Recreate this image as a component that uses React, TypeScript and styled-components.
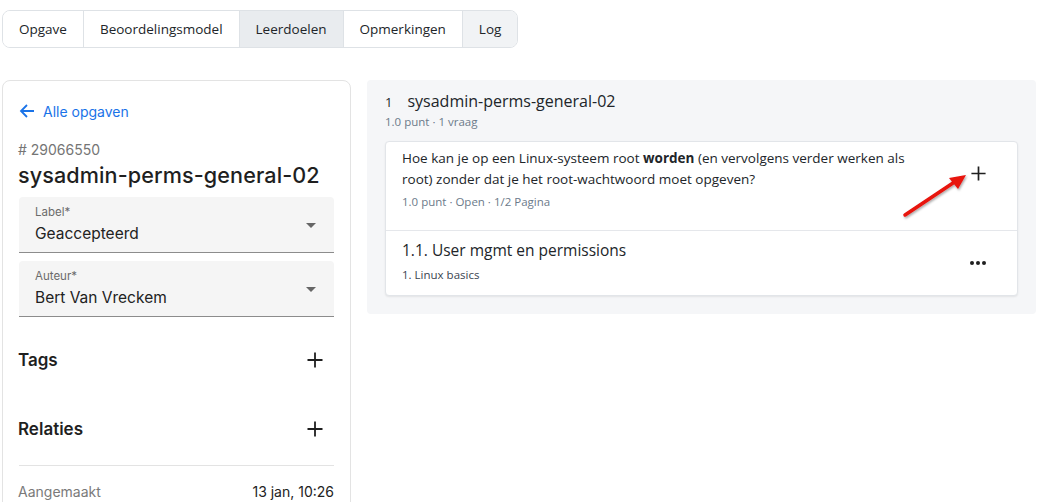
import React from "react";
import styled, { createGlobalStyle } from "styled-components";

const Global = createGlobalStyle`
  body { margin: 0; background: #fff; font-family: "Lato", "Open Sans", sans-serif; color: #212529; }
  * { box-sizing: border-box; }
`;

const Page = styled.div`
  width: 1052px;
  height: 502px;
  overflow: hidden;
  padding: 10px 16px 0 2px;
`;

const Tabs = styled.div`
  display: inline-flex;
  border: 1px solid #dee2e6;
  border-radius: 8px;
  overflow: hidden;
  height: 38px;
`;

const Tab = styled.div<{ $active?: boolean; $muted?: boolean }>`
  display: flex;
  align-items: center;
  padding: 0 16px;
  font-family: "Open Sans", sans-serif;
  font-size: 13.5px;
  color: #212529;
  background: ${(p) => (p.$active ? "#e9ecef" : p.$muted ? "#f1f3f5" : "#fff")};
  border-left: 1px solid #dee2e6;
  &:first-child { border-left: none; }
`;

const Main = styled.div`
  display: flex;
  gap: 16px;
  margin-top: 32px;
  align-items: flex-start;
`;

const Side = styled.div`
  width: 349px;
  height: 440px;
  border: 1px solid #e3e3e3;
  border-radius: 8px;
  padding: 19px 16px 0 15px;
  font-family: "Inter", sans-serif;
`;

const BackLink = styled.div`
  display: flex;
  align-items: center;
  gap: 8px;
  color: #1a73e8;
  font-size: 14px;
  height: 22px;
  padding-left: 1px;
`;

const Id = styled.div`
  margin-top: 18px;
  color: #757575;
  font-size: 14px;
  line-height: 20px;
`;

const Title = styled.div`
  font-size: 21.6px;
  font-weight: 500;
  color: #1f1f1f;
  line-height: 28px;
  margin-top: 1px;
  letter-spacing: 0.1px;
`;

const Select = styled.div`
  position: relative;
  margin-top: 8px;
  margin-left: 1px;
  height: 56px;
  background: #f5f5f5;
  border-radius: 4px 4px 0 0;
  border-bottom: 1px solid #8c8c8c;
  padding: 8px 16px 0 16px;
`;

const SelectLabel = styled.div`
  font-size: 11.5px;
  color: #6b6b6b;
  line-height: 14px;
`;

const SelectValue = styled.div`
  font-size: 15.5px;
  color: #222;
  line-height: 24px;
  margin-top: 3px;
`;

const Caret = styled.div`
  position: absolute;
  right: 18px;
  top: 26px;
  width: 0;
  height: 0;
  border-left: 5px solid transparent;
  border-right: 5px solid transparent;
  border-top: 5px solid #666;
`;

const Section = styled.div<{ $top: number }>`
  display: flex;
  justify-content: space-between;
  align-items: center;
  margin-top: ${(p) => p.$top}px;
  padding-right: 10px;
  font-size: 17px;
  font-weight: 600;
  color: #1f1f1f;
  height: 24px;
`;

const Divider = styled.div`
  margin-top: 24px;
  margin-left: 1px;
  height: 1px;
  background: #e3e3e3;
`;

const MetaRow = styled.div`
  display: flex;
  justify-content: space-between;
  margin-top: 17px;
  font-size: 14px;
  color: #7a7a7a;
  & > span:last-child { color: #222; }
`;

const Panel = styled.div`
  position: relative;
  width: 669px;
  background: #f5f6f8;
  border-radius: 4px;
  padding: 10px 18px 18px 18px;
  font-family: "Open Sans", sans-serif;
`;

const PanelHead = styled.div`
  display: flex;
  align-items: baseline;
  gap: 15px;
  color: #212529;
`;

const Num = styled.span`
  font-size: 13px;
`;

const PanelTitle = styled.span`
  font-size: 16px;
  font-weight: 500;
`;

const Sub = styled.div`
  margin-top: 2px;
  font-size: 11.5px;
  color: #6c7a8a;
`;

const Card = styled.div`
  margin-top: 12px;
  background: #fff;
  border: 1px solid #e2e5e9;
  border-radius: 4px;
  box-shadow: 0 1px 2px rgba(0, 0, 0, 0.08);
`;

const QuestionRow = styled.div`
  display: flex;
  justify-content: space-between;
  align-items: flex-start;
  padding: 6px 30px 0 16px;
  height: 88px;
`;

const GoalRow = styled.div`
  display: flex;
  justify-content: space-between;
  align-items: center;
  padding: 0 30px 0 16px;
  height: 65px;
  border-top: 1px solid #e5e7eb;
`;

const Question = styled.div`
  font-size: 13.5px;
  line-height: 21px;
  color: #212529;
  width: 520px;
`;

const Small = styled.div`
  margin-top: 4px;
  font-size: 11.5px;
  line-height: 16px;
  color: #6c7a8a;
`;

const PlusSlot = styled.div`
  margin-top: 17px;
  display: flex;
`;

const Goal = styled.div`
  font-size: 15.5px;
  font-weight: 500;
  color: #212529;
  margin-top: -6px;
`;

const GoalSub = styled.div`
  font-size: 11.5px;
  color: #3a4450;
  margin-top: 6px;
`;

const ArrowOverlay = styled.svg`
  position: absolute;
  left: 530px;
  top: 87px;
  overflow: visible;
`;

const Plus = ({ size = 18 }: { size?: number }) => (
  <svg width={size} height={size} viewBox="0 0 18 18">
    <path d="M9 1.5V16.5M1.5 9H16.5" stroke="#1f1f1f" strokeWidth="1.8" />
  </svg>
);

export default function App() {
  return (
    <Page>
      <Global />
      <Tabs>
        <Tab>Opgave</Tab>
        <Tab>Beoordelingsmodel</Tab>
        <Tab $active>Leerdoelen</Tab>
        <Tab>Opmerkingen</Tab>
        <Tab $muted>Log</Tab>
      </Tabs>
      <Main>
        <Side>
          <BackLink>
            <svg width="16" height="16" viewBox="0 0 16 16">
              <path d="M15 8H2M8 2L2 8l6 6" stroke="#1a73e8" strokeWidth="1.8" fill="none" />
            </svg>
            Alle opgaven
          </BackLink>
          <Id># 29066550</Id>
          <Title>sysadmin-perms-general-02</Title>
          <Select>
            <SelectLabel>Label*</SelectLabel>
            <SelectValue>Geaccepteerd</SelectValue>
            <Caret />
          </Select>
          <Select>
            <SelectLabel>Auteur*</SelectLabel>
            <SelectValue>Bert Van Vreckem</SelectValue>
            <Caret />
          </Select>
          <Section $top={31}>
            Tags <Plus />
          </Section>
          <Section $top={45}>
            Relaties <Plus />
          </Section>
          <Divider />
          <MetaRow>
            <span>Aangemaakt</span>
            <span>13 jan, 10:26</span>
          </MetaRow>
        </Side>
        <Panel>
          <PanelHead>
            <Num>1</Num>
            <PanelTitle>sysadmin-perms-general-02</PanelTitle>
          </PanelHead>
          <Sub>1.0 punt · 1 vraag</Sub>
          <Card>
            <QuestionRow>
              <div>
                <Question>
                  Hoe kan je op een Linux-systeem root <b>worden</b> (en vervolgens verder werken als
                  root) zonder dat je het root-wachtwoord moet opgeven?
                </Question>
                <Small>1.0 punt · Open · 1/2 Pagina</Small>
              </div>
              <PlusSlot>
                <Plus size={17} />
              </PlusSlot>
            </QuestionRow>
            <GoalRow>
              <div>
                <Goal>1.1. User mgmt en permissions</Goal>
                <GoalSub>1. Linux basics</GoalSub>
              </div>
              <svg width="18" height="6" viewBox="0 0 18 6">
                <circle cx="3" cy="3" r="2" fill="#1f1f1f" />
                <circle cx="9" cy="3" r="2" fill="#1f1f1f" />
                <circle cx="15" cy="3" r="2" fill="#1f1f1f" />
              </svg>
            </GoalRow>
          </Card>
          <ArrowOverlay width="80" height="60">
            <defs>
              <filter id="sh" x="-20%" y="-20%" width="140%" height="140%">
                <feDropShadow dx="1" dy="1.5" stdDeviation="1" floodColor="#000" floodOpacity="0.35" />
              </filter>
            </defs>
            <g filter="url(#sh)">
              <path d="M8 48 L62 12" stroke="#e8120c" strokeWidth="3.5" strokeLinecap="round" />
              <path d="M69 8 L52 11 L61 22 Z" fill="#e8120c" />
            </g>
          </ArrowOverlay>
        </Panel>
      </Main>
    </Page>
  );
}
